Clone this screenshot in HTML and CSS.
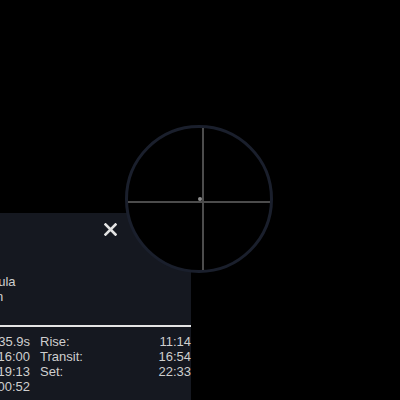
FILE: index.html
```html
<!DOCTYPE html>
<html>
<head>
<meta charset="utf-8">
<link rel="stylesheet" href="styles.css">
</head>
<body>
<div class="sky">
  <div class="panel">
    <div class="panel-head">
      <button class="close" aria-label="Close">
        <svg width="13" height="13" viewBox="0 0 13 13"><path d="M1.5 1.5 L11.5 11.5 M11.5 1.5 L1.5 11.5" stroke="#e2e2e2" stroke-width="2.6" stroke-linecap="square" fill="none"/></svg>
      </button>
    </div>
    <div class="info">
      <div class="info-line">Orion Nebula</div>
      <div class="info-line">M42, Orion</div>
    </div>
    <div class="sep"></div>
    <div class="details">
      <span class="lbl">RA:</span><span class="val">05h 35m 35.9s</span><span class="lbl2">Rise:</span><span class="val">11:14</span>
      <span class="lbl">Local:</span><span class="val">16:00</span><span class="lbl2">Transit:</span><span class="val">16:54</span>
      <span class="lbl">UTC:</span><span class="val">19:13</span><span class="lbl2">Set:</span><span class="val">22:33</span>
      <span class="lbl">LST:</span><span class="val">00:52</span><span class="lbl2"></span><span class="val"></span>
    </div>
  </div>
  <div class="reticle">
    <div class="dot"></div>
  </div>
</div>
</body>
</html>
```
FILE: styles.css
```css
html, body {
  margin: 0;
  padding: 0;
  background: #000;
}
.sky {
  position: relative;
  width: 400px;
  height: 400px;
  overflow: hidden;
  background: #000;
  font-family: "Liberation Sans", Arial, sans-serif;
  font-size: 13px;
  line-height: 15px;
  color: #cfcfcf;
}
.panel {
  position: absolute;
  left: -200px;
  top: 213px;
  width: 391px;
  height: 200px;
  background: #151820;
  display: flex;
  flex-direction: column;
}
.panel-head {
  display: flex;
  justify-content: flex-end;
  padding: 10px 74px 0 0;
  height: 14px;
}
.close {
  width: 13px;
  height: 13px;
  padding: 0;
  border: 0;
  background: none;
  display: block;
}
.close svg { display: block; }
.info {
  margin-top: 37px;
  padding-left: 139px;
}
.info-line { white-space: nowrap; }
.sep {
  margin-top: 21px;
  height: 2px;
  background: #e4e4e4;
}
.details {
  padding-top: 7px;
  padding-left: 10px;
  display: grid;
  grid-template-columns: 60px 160px 60px 1fr;
  column-gap: 0;
}
.details .lbl2 { padding-left: 10px; }
.details .val { text-align: right; white-space: nowrap; }
.reticle {
  position: absolute;
  left: 125px;
  top: 125px;
  width: 148px;
  height: 148px;
  box-sizing: border-box;
  border: 3px solid #1a1f2c;
  border-radius: 50%;
  background: #000;
}
.reticle::before {
  content: "";
  position: absolute;
  left: 74px;
  top: 0;
  width: 2px;
  height: 142px;
  background: #4c4c4c;
}
.reticle::after {
  content: "";
  position: absolute;
  top: 73px;
  left: 0;
  height: 2px;
  width: 142px;
  background: #4c4c4c;
}
.dot {
  position: absolute;
  left: 70px;
  top: 69px;
  width: 4px;
  height: 4px;
  border-radius: 50%;
  background: #8c8c8c;
}
```
